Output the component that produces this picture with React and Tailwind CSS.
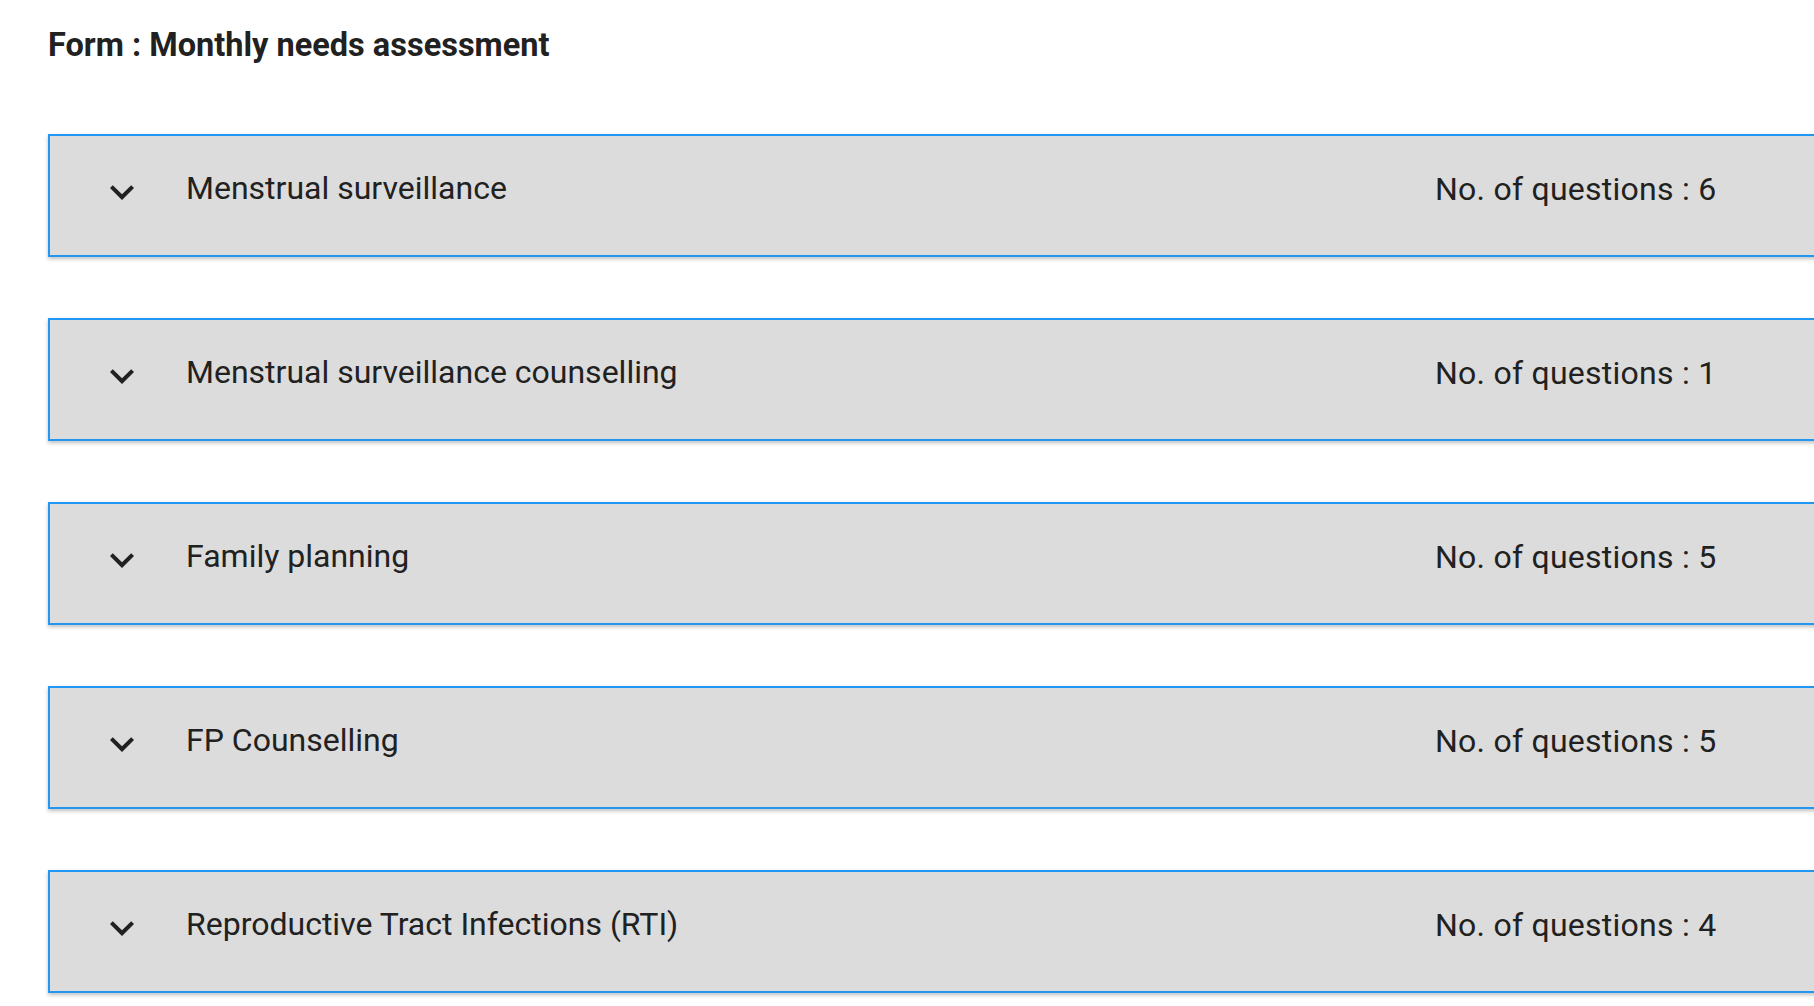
import React from "react";

const sections = [
  { name: "Menstrual surveillance", count: 6 },
  { name: "Menstrual surveillance counselling", count: 1 },
  { name: "Family planning", count: 5 },
  { name: "FP Counselling", count: 5 },
  { name: "Reproductive Tract Infections (RTI)", count: 4 },
];

function Chevron() {
  return (
    <svg viewBox="0 0 24 24" className="w-[48px] h-[48px] shrink-0 -mt-[1px]" fill="#212121">
      <path d="M16.59 8.59 12 13.17 7.41 8.59 6 10l6 6 6-6z" />
    </svg>
  );
}

export default function App() {
  return (
    <div
      className="w-screen h-screen overflow-hidden bg-white text-[#212121] pl-[48px] pt-[27px]"
      style={{ fontFamily: "Roboto, 'Noto Sans', sans-serif" }}
    >
      <h1 className="text-[32.5px] leading-[36px] font-bold h-[36px] whitespace-nowrap">
        Form : Monthly needs assessment
      </h1>
      <div className="mt-[71px] flex flex-col gap-[61px]">
        {sections.map((s) => (
          <div
            key={s.name}
            className="w-[1820px] h-[123px] box-border border-2 border-[#2196f3] bg-[#dcdcdc] shadow-[0_2px_4px_rgba(0,0,0,0.25)] flex items-start pt-[33px] pl-[48px]"
          >
            <Chevron />
            <div className="ml-[40px] w-[1249px] text-[32px] leading-[38px] whitespace-nowrap">
              {s.name}
            </div>
            <div className="mt-[1px] text-[32px] leading-[38px] tracking-[0.25px] whitespace-nowrap">
              No. of questions : {s.count}
            </div>
          </div>
        ))}
      </div>
    </div>
  );
}
